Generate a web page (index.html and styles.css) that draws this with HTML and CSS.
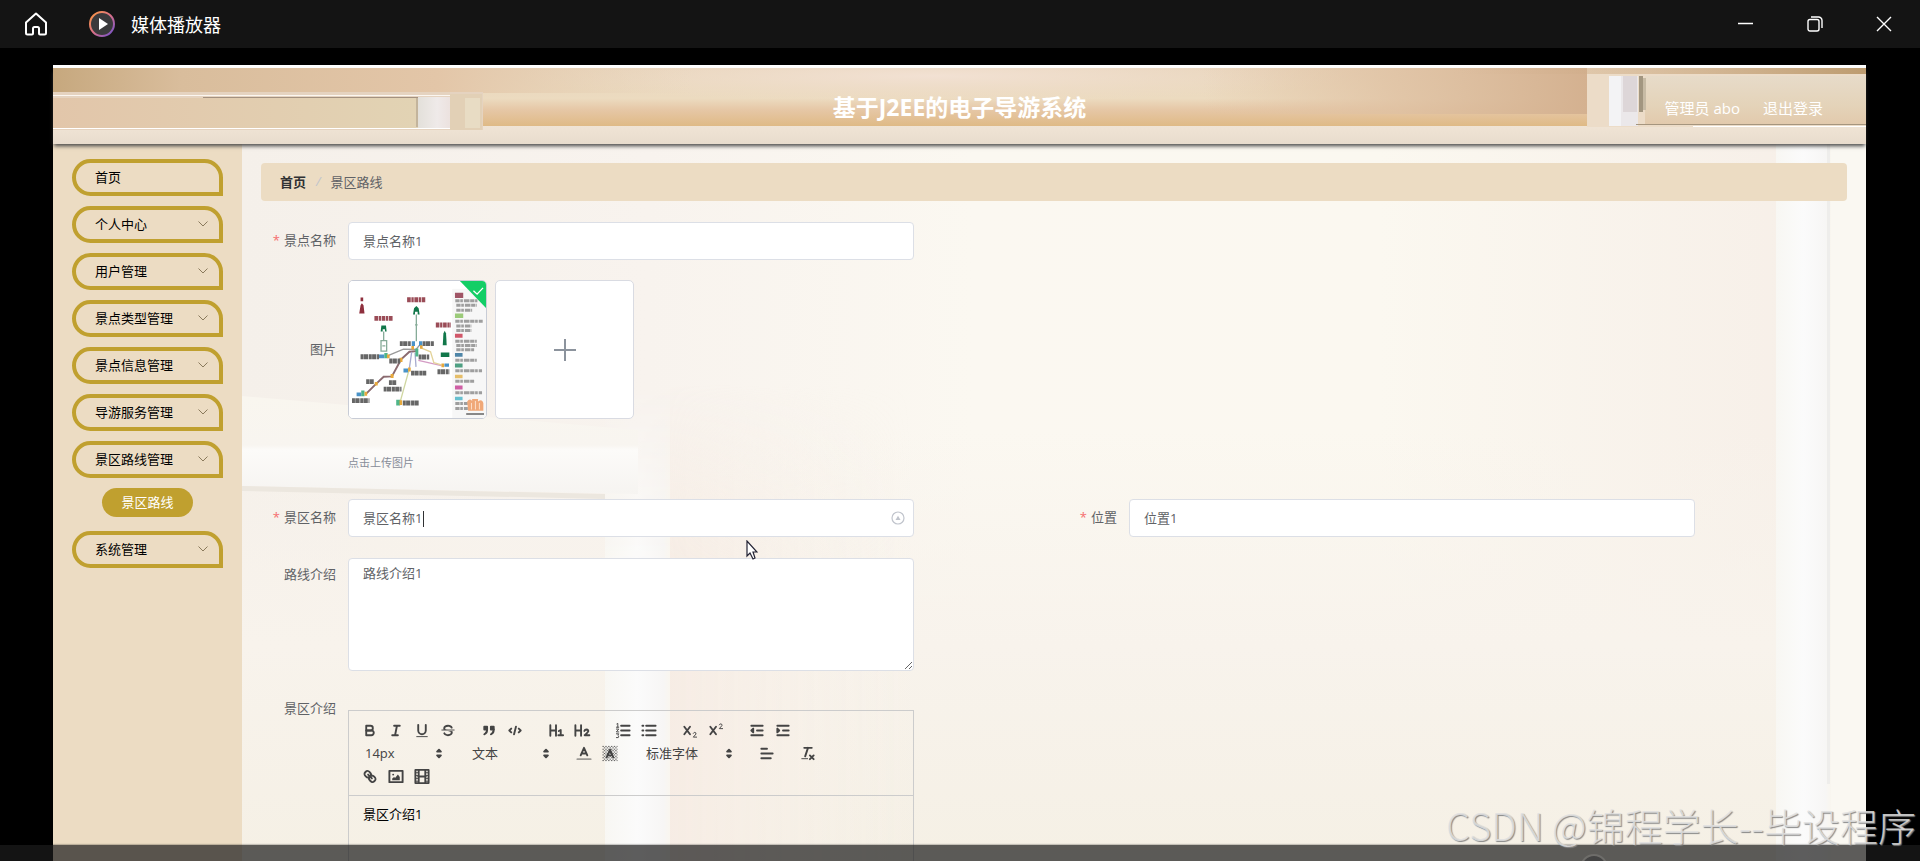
FILE: index.html
```html
<!DOCTYPE html>
<html lang="zh-CN">
<head>
    <meta charset="UTF-8">
    <meta name="viewport" content="width=device-width, initial-scale=1.0">
    <title>媒体播放器</title>
    <link rel="stylesheet" href="styles.css">
</head>
<body>
    <div class="player">
        <!-- Player title bar -->
        <div class="titlebar">
            <button class="tb-btn home" aria-label="主页">
                <svg width="24" height="24" viewBox="0 0 24 24" fill="none" stroke="#fff" stroke-width="2" stroke-linejoin="round"><path d="M12 1.5 L2 10.5 V21 a1.5 1.5 0 0 0 1.500 1.500 H8 a1 1 0 0 0 1-1 V16.500 a1.500 1.500 0 0 1 1.500-1.500 h3 a1.500 1.500 0 0 1 1.500 1.500 V21.500 a1 1 0 0 0 1 1 h4.500 a1.500 1.500 0 0 0 1.500-1.500 V10.500 Z"/></svg>
            </button>
            <svg class="logo" width="26" height="26" viewBox="0 0 26 26">
                <defs>
                    <linearGradient id="ring" x1="0" y1="0" x2="1" y2="1">
                        <stop offset="0" stop-color="#ff9a3c"/>
                        <stop offset="0.5" stop-color="#d9708a"/>
                        <stop offset="1" stop-color="#6a4fd0"/>
                    </linearGradient>
                </defs>
                <circle cx="13" cy="13" r="12" fill="#3a3a3c" stroke="url(#ring)" stroke-width="2"/>
                <path d="M10 7 L19 13 L10 19 Z" fill="#fff"/>
            </svg>
            <span class="app-name">媒体播放器</span>
            <div class="win-btns">
                <button class="tb-btn" aria-label="最小化"><svg width="16" height="16" viewBox="0 0 16 16" fill="none" stroke="#fff" stroke-width="1.500"><path d="M0 7.500 H15"/></svg></button>
                <button class="tb-btn" aria-label="还原"><svg width="16" height="16" viewBox="0 0 16 16" fill="none" stroke="#fff" stroke-width="1.400"><rect x="1" y="3.500" width="11" height="11.500" rx="2"/><path d="M4 1 H11.500 a3.500 3.500 0 0 1 3.500 3.500 V12"/></svg></button>
                <button class="tb-btn" aria-label="关闭"><svg width="16" height="16" viewBox="0 0 16 16" fill="none" stroke="#fff" stroke-width="1.400"><path d="M1 1 L15 15 M15 1 L1 15"/></svg></button>
            </div>
        </div>

        <div class="stage">
            <header class="header">
                <svg class="art" viewBox="0 0 1813 76" preserveAspectRatio="none">
                    <defs>
                        <linearGradient id="wood" x1="0" y1="0" x2="0" y2="1">
                            <stop offset="0" stop-color="#e8d4bb"/>
                            <stop offset="0.4" stop-color="#ecdbc0"/>
                            <stop offset="0.55" stop-color="#e6c7a6"/>
                            <stop offset="0.76" stop-color="#dfba86"/>
                        </linearGradient>
                        <linearGradient id="side" x1="0" y1="0" x2="1" y2="0">
                            <stop offset="0" stop-color="#c6a87e"/>
                            <stop offset="0.2" stop-color="#d9bd9c"/>
                            <stop offset="0.6" stop-color="#e3c6a8"/>
                            <stop offset="1" stop-color="#e6d3b8" stop-opacity="0"/>
                        </linearGradient>
                        <radialGradient id="glow">
                            <stop offset="0" stop-color="#f2e1d3"/>
                            <stop offset="1" stop-color="#f0dfcd" stop-opacity="0"/>
                        </radialGradient>
                        <linearGradient id="dusk" x1="0" y1="0" x2="1" y2="0">
                            <stop offset="0" stop-color="#e2c4a4" stop-opacity="0"/>
                            <stop offset="0.5" stop-color="#dfc1a2" stop-opacity="0.8"/>
                            <stop offset="1" stop-color="#d4b190"/>
                        </linearGradient>
                        <linearGradient id="lbox" x1="0" y1="0" x2="1" y2="0">
                            <stop offset="0" stop-color="#e2c6aa"/>
                            <stop offset="1" stop-color="#e2d3b4"/>
                        </linearGradient>
                        <linearGradient id="lwhite" x1="0" y1="0" x2="1" y2="0">
                            <stop offset="0" stop-color="#e3e0da"/>
                            <stop offset="0.6" stop-color="#efeae9"/>
                            <stop offset="1" stop-color="#ece2df"/>
                        </linearGradient>
                        <linearGradient id="rbox" x1="0" y1="0" x2="0" y2="1">
                            <stop offset="0" stop-color="#e7dbc9"/>
                            <stop offset="0.6" stop-color="#e4d3b9"/>
                            <stop offset="1" stop-color="#e2c9ac"/>
                        </linearGradient>
                        <linearGradient id="trim" x1="0" y1="0" x2="1" y2="0">
                            <stop offset="0" stop-color="#d4b190" stop-opacity="0"/>
                            <stop offset="1" stop-color="#bd9c70"/>
                        </linearGradient>
                        <linearGradient id="ledge" x1="0" y1="0" x2="0" y2="1">
                            <stop offset="0" stop-color="#f0e4d5"/>
                            <stop offset="1" stop-color="#e8dccd"/>
                        </linearGradient>
                    </defs>
                    <rect width="1813" height="76" fill="url(#wood)"/>
                    <ellipse cx="880" cy="8" rx="420" ry="26" fill="url(#glow)"/>
                    <rect x="1150" width="384" height="46" fill="url(#dusk)"/>
                    <rect width="640" height="25" fill="url(#side)"/>
                    <rect y="58" width="1813" height="18" fill="url(#ledge)"/>
                    <rect y="24" width="430" height="38" fill="#e5d3c0"/>
                    <rect y="27" width="397" height="1" fill="#fbf6f0"/>
                    <rect x="150" y="29" width="215" height="1" fill="#a39180"/>
                    <rect y="30" width="365" height="30" fill="url(#lbox)"/>
                    <rect x="363" y="30" width="2" height="29" fill="#c3b49c"/>
                    <rect x="365" y="29" width="32" height="31" fill="url(#lwhite)"/>
                    <rect x="397" y="26" width="32" height="36" fill="#e2d0b6"/>
                    <rect x="412" y="30" width="15" height="30" fill="#e8dcc4"/>
                    <rect y="60" width="397" height="1" fill="#fff"/>
                    <rect x="1400" width="413" height="6" fill="url(#trim)"/>
                    <rect x="1534" y="6" width="279" height="53" fill="#ecdcc8"/>
                    <rect x="1556" y="8" width="29" height="50" fill="#ebe8ea"/>
                    <rect x="1556" y="8" width="12" height="50" fill="#f3f3f5"/>
                    <rect x="1570" y="8" width="14" height="36" fill="#ddd6d8"/>
                    <rect x="1592" y="8" width="221" height="49" fill="url(#rbox)"/>
                    <rect x="1586" y="8" width="4" height="36" fill="#a29680"/>
                    <rect x="1590" y="10" width="3" height="32" fill="#c7bba5"/>
                    <rect x="1583" y="56" width="230" height="1" fill="#a5957e"/>
                    <rect x="1640" y="58" width="173" height="1" fill="#fff"/>
                </svg>
                <h1>基于J2EE的电子导游系统</h1>
                <div class="user">
                    <span>管理员 abo</span>
                    <a href="#">退出登录</a>
                </div>
            </header>

            <div class="main">
                <!-- Side menu -->
                <nav class="side">
                    <a class="item" href="#">首页</a>
                    <a class="item" href="#">个人中心<svg class="arrow" viewBox="0 0 10 6"><path d="M0.500 0.500 L5 5 L9.500 0.500"/></svg></a>
                    <a class="item" href="#">用户管理<svg class="arrow" viewBox="0 0 10 6"><path d="M0.500 0.500 L5 5 L9.500 0.500"/></svg></a>
                    <a class="item" href="#">景点类型管理<svg class="arrow" viewBox="0 0 10 6"><path d="M0.500 0.500 L5 5 L9.500 0.500"/></svg></a>
                    <a class="item" href="#">景点信息管理<svg class="arrow" viewBox="0 0 10 6"><path d="M0.500 0.500 L5 5 L9.500 0.500"/></svg></a>
                    <a class="item" href="#">导游服务管理<svg class="arrow" viewBox="0 0 10 6"><path d="M0.500 0.500 L5 5 L9.500 0.500"/></svg></a>
                    <a class="item" href="#">景区路线管理<svg class="arrow" viewBox="0 0 10 6"><path d="M0.500 0.500 L5 5 L9.500 0.500"/></svg></a>
                    <a class="sub" href="#">景区路线</a>
                    <a class="item" href="#">系统管理<svg class="arrow" viewBox="0 0 10 6"><path d="M0.500 0.500 L5 5 L9.500 0.500"/></svg></a>
                </nav>

                <div class="content">
                    <svg class="art" viewBox="0 0 1624 717" preserveAspectRatio="none">
                        <defs>
                            <linearGradient id="wall" x1="0" y1="0" x2="1" y2="0">
                                <stop offset="0" stop-color="#f5f0ea"/>
                                <stop offset="0.25" stop-color="#f8f3ee"/>
                                <stop offset="0.45" stop-color="#fbf8f1"/>
                                <stop offset="0.7" stop-color="#fbf8f0"/>
                                <stop offset="1" stop-color="#f6eee7"/>
                            </linearGradient>
                            <linearGradient id="floor" x1="0" y1="0" x2="0" y2="1">
                                <stop offset="0.4" stop-color="#f8f3ec" stop-opacity="0"/>
                                <stop offset="0.7" stop-color="#f8f3ec"/>
                                <stop offset="1" stop-color="#f5f0e5"/>
                            </linearGradient>
                            <linearGradient id="beam" x1="0" y1="0" x2="0" y2="1">
                                <stop offset="0" stop-color="#f9f6ef"/>
                                <stop offset="0.5" stop-color="#f8f5f0"/>
                                <stop offset="0.55" stop-color="#fcfbf9"/>
                                <stop offset="1" stop-color="#f6f4f1"/>
                            </linearGradient>
                            <linearGradient id="pillar" x1="0" y1="0" x2="1" y2="0">
                                <stop offset="0" stop-color="#f8f7f3"/>
                                <stop offset="0.5" stop-color="#fbfbfb"/>
                                <stop offset="0.9" stop-color="#f7f6f5"/>
                                <stop offset="1" stop-color="#f9f6ef"/>
                            </linearGradient>
                            <linearGradient id="warm" x1="0" y1="0" x2="1" y2="0">
                                <stop offset="0" stop-color="#f6ece4"/>
                                <stop offset="1" stop-color="#f8f2ea" stop-opacity="0"/>
                            </linearGradient>
                            <linearGradient id="fade" x1="0" y1="0" x2="0" y2="1">
                                <stop offset="0" stop-color="#000"/>
                                <stop offset="0.4" stop-color="#fff"/>
                            </linearGradient>
                            <mask id="low"><rect y="240" width="1624" height="477" fill="url(#fade)"/></mask>
                        </defs>
                        <rect width="1624" height="717" fill="url(#wall)"/>
                        <rect width="1624" height="717" fill="url(#floor)"/>
                        <g mask="url(#low)">
                            <rect x="428" y="240" width="240" height="477" fill="url(#warm)"/>
                            <rect x="363" y="240" width="65" height="477" fill="url(#pillar)"/>
                        </g>
                        <path d="M0 252 L396 286 V350 L0 342 Z" fill="url(#beam)"/>
                        <path d="M0 342 L363 350 V355 L0 347 Z" fill="#ece7df"/>
                        <rect x="1534" width="55" height="717" fill="url(#pillar)"/>
                        <rect x="1585" width="3" height="640" fill="#eeedeb"/>
                        <rect x="1589" width="35" height="717" fill="#faf8f2"/>
                    </svg>

                    <div class="crumbs">
                        <a href="#">首页</a>
                        <i>/</i>
                        <span>景区路线</span>
                    </div>

                    <form class="form">
                        <div class="fi wide">
                            <label class="req" for="spot">景点名称</label>
                            <div class="field"><input type="text" id="spot" value="景点名称1"></div>
                        </div>

                        <div class="fi wide pic">
                            <label for="pic">图片</label>
                            <div class="field">
                                <div class="cards">
                                    <div class="card">
                                        <!-- Route map thumbnail -->
                                        <svg viewBox="25 16 415 418" preserveAspectRatio="none">
                                            <rect x="25" y="16" width="415" height="418" fill="#fff"/>
                                            <rect x="338" y="40" width="102" height="394" fill="#f7f7f7"/>
                                            <path d="M60 90 L64 84 L69 90 L72 115 H56 Z M60 66 h8 v12 h-8 Z" fill="#8e2f3d"/>
                                            <g stroke="#9a4c57" stroke-width="15" stroke-dasharray="11 2 7 2">
                                                <path d="M201 73 H258 M102 130 H159 M288 150 H334"/>
                                            </g>
                                            <g fill="#11774a">
                                                <path d="M219 118 L222 99 L229 92 L236 99 L239 118 H233 V110 H225 V118 Z"/>
                                                <path d="M121 170 L123 152 H137 L139 170 H134 V163 H127 V170 Z"/>
                                                <path d="M309 212 L311 176 L315 168 L319 176 L321 212 Z"/>
                                                <path d="M303 234 H329 V248 H303 Z"/>
                                            </g>
                                            <g fill="none" stroke="#86ab98" stroke-width="4">
                                                <path d="M229 118 V200 M225 150 h8 M130 170 V198"/>
                                                <path d="M122 198 H139 V230 H122 Z M126 214 H135"/>
                                            </g>
                                            <g fill="none" stroke-width="4">
                                                <path d="M145 243 L190 224 L228 225 L240 210" stroke="#999"/>
                                                <path d="M75 362 L107 330 L130 308 L155 307 L183 255 L208 232 L230 230" stroke="#8b6b70" stroke-width="6"/>
                                                <path d="M215 232 L207 288 M225 235 L228 278" stroke="#a7abcf"/>
                                                <path d="M235 258 L305 274" stroke="#d49bc4"/>
                                                <path d="M243 220 L272 232 L282 265 L305 272" stroke="#e3d39a"/>
                                                <path d="M180 385 L206 290" stroke="#cfd6a0"/>
                                            </g>
                                            <g fill="#4a93c8">
                                                <path d="M116 240 h16 v12 h-16 Z M215 200 h10 v14 h-10 Z M237 200 h10 v14 h-10 Z M190 283 h14 v12 h-14 Z M48 356 h14 v12 h-14 Z M314 268 h14 v10 h-14 Z"/>
                                            </g>
                                            <g fill="#4fb58a">
                                                <path d="M132 236 h10 v16 h-10 Z M226 222 h9 v24 h-9 Z M62 350 h10 v18 h-10 Z M168 378 h12 v18 h-12 Z"/>
                                            </g>
                                            <g fill="#e8a93c">
                                                <path d="M140 240 h8 v12 h-8 Z M178 250 h9 v13 h-9 Z M103 324 h9 v11 h-9 Z M151 300 h9 v12 h-9 Z M72 354 h8 v12 h-8 Z M204 280 h8 v12 h-8 Z M305 268 h8 v11 h-8 Z M214 214 h8 v11 h-8 Z M240 212 h8 v11 h-8 Z M178 380 h8 v14 h-8 Z"/>
                                            </g>
                                            <g stroke="#666" stroke-width="15" stroke-dasharray="9 1 13 2">
                                                <path d="M60 247 H116 M179 207 H212 M248 207 H282 M147 260 H180 M236 248 H268 M213 297 H259 M293 293 H329 M77 323 H102 M146 326 H168 M130 346 H184 M34 381 H87 M188 388 H236"/>
                                            </g>
                                            <g stroke="#888" stroke-width="9" stroke-dasharray="13 2 8 3 17 2" opacity="0.8">
                                                <path d="M347 76 H414 M350 90 H412 M350 105 H398 M347 139 H430 M350 153 H396 M350 167 H396 M347 200 H412 M350 213 H412 M350 226 H404 M347 258 H412 M347 290 H428 M347 322 H404 M347 357 H428 M347 390 H385 M347 405 H385"/>
                                            </g>
                                            <path d="M346 52 H371 V68 H346 Z" fill="#a05566"/>
                                            <path d="M346 115 H371 V129 H346 Z" fill="#9ccb7a"/>
                                            <path d="M346 177 H369 V189 H346 Z" fill="#d1586a"/>
                                            <path d="M346 236 H369 V247 H346 Z" fill="#4f86a8"/>
                                            <path d="M346 268 H369 V280 H346 Z" fill="#4fa083"/>
                                            <path d="M346 302 H369 V313 H346 Z" fill="#e6be6a"/>
                                            <path d="M346 335 H369 V347 H346 Z" fill="#cf5fa5"/>
                                            <path d="M346 369 H369 V380 H346 Z" fill="#67c0d0"/>
                                            <path d="M383 384 Q390 372 398 382 V376 H416 V384 Q428 374 432 388 V412 H386 Z" fill="#f0a878"/>
                                            <path d="M396 388 v20 M408 382 v26 M420 388 v20" stroke="#fbe0cb" stroke-width="3"/>
                                            <path d="M380 422 H434" stroke="#888" stroke-width="6"/>
                                            <path d="M361 16 H440 V98 Z" fill="#13ce66"/>
                                            <path d="M402 46 L413 56 L431 37" fill="none" stroke="#fff" stroke-width="4"/>
                                        </svg>
                                    </div>
                                    <div class="card add">
                                        <input type="file" id="pic">
                                        <svg width="22" height="22" viewBox="0 0 22 22" stroke="#8c939d" stroke-width="2"><path d="M11 0 V22 M0 11 H22"/></svg>
                                    </div>
                                </div>
                                <p class="tip">点击上传图片</p>
                            </div>
                        </div>

                        <div class="fi">
                            <label class="req" for="area">景区名称</label>
                            <div class="field">
                                <input type="text" id="area" value="景区名称1">
                                <span class="caret"></span>
                                <svg class="clear" viewBox="0 0 14 14" fill="none" stroke="#c0c4cc" stroke-width="1.200"><circle cx="7" cy="7" r="6"/><path d="M5.500 8.500 L7 6 L8.500 8.500 Z"/></svg>
                            </div>
                        </div>
                        <div class="fi second">
                            <label class="req" for="place">位置</label>
                            <div class="field"><input type="text" id="place" value="位置1"></div>
                        </div>

                        <div class="fi">
                            <label class="top" for="route">路线介绍</label>
                            <div class="field"><textarea id="route">路线介绍1</textarea></div>
                        </div>

                        <div class="fi wide">
                            <label class="top" id="introLabel">景区介绍</label>
                            <div class="field editor">
                                <div class="toolbar">
                                    <span class="group">
                                        <button type="button" aria-label="加粗"><svg viewBox="0 0 18 18"><path class="s" d="M5,4H9.500A2.500,2.500,0,0,1,12,6.500v0A2.500,2.500,0,0,1,9.500,9H5A0,0,0,0,1,5,9V4A0,0,0,0,1,5,4Z"/><path class="s" d="M5,9h5.500A2.500,2.500,0,0,1,13,11.500v0A2.500,2.500,0,0,1,10.500,14H5a0,0,0,0,1,0,0V9A0,0,0,0,1,5,9Z"/></svg></button>
                                        <button type="button" aria-label="斜体"><svg viewBox="0 0 18 18"><path class="s" d="M7 4H13M5 14H11M8 14L10 4"/></svg></button>
                                        <button type="button" aria-label="下划线"><svg viewBox="0 0 18 18"><path class="s" d="M5,3V9a4.012,4.012,0,0,0,4,4H9a4.012,4.012,0,0,0,4-4V3"/><rect class="f" x="3" y="15" width="12" height="1"/></svg></button>
                                        <button type="button" aria-label="删除线"><svg viewBox="0 0 18 18"><path class="s t" d="M15.500 8.500H2.500"/><path class="f" d="M9.007,8C6.542,7.791,6,7.519,6,6.500,6,5.792,7.283,5,9,5c1.571,0,2.765.679,2.969,1.309a1,1,0,0,0,1.900-.617C13.356,4.106,11.354,3,9,3,6.200,3,4,4.538,4,6.500a3.200,3.200,0,0,0,.5,1.843Z"/><path class="f" d="M8.984,10C11.457,10.208,12,10.479,12,11.500c0,.708-1.283,1.500-3,1.500-1.571,0-2.765-.679-2.969-1.309a1,1,0,1,0-1.900.617C4.644,13.894,6.646,15,9,15c2.800,0,5-1.538,5-3.500a3.200,3.200,0,0,0-.5-1.843Z"/></svg></button>
                                    </span>
                                    <span class="group">
                                        <button type="button" aria-label="引用"><svg viewBox="0 0 18 18"><rect class="f s" x="4" y="5" width="3" height="3"/><rect class="f s" x="11" y="5" width="3" height="3"/><path class="f s" d="M7,8c0,4.031-3,5-3,5M14,8c0,4.031-3,5-3,5"/></svg></button>
                                        <button type="button" aria-label="代码"><svg viewBox="0 0 18 18"><path class="s" d="M5 7L3 9L5 11M13 7L15 9L13 11M10 5L8 13"/></svg></button>
                                    </span>
                                    <span class="group">
                                        <button type="button" aria-label="标题1"><svg viewBox="0 0 18 18"><path class="s" d="M3 3.500V14.500M9 3.500V14.500M3 9H9M12 9.500L14 8.500V14M11.500 14H16.500"/></svg></button>
                                        <button type="button" aria-label="标题2"><svg viewBox="0 0 18 18"><path class="s" d="M2 3.500V14.500M8 3.500V14.500M2 9H8M11.500 9.500Q12 8 13.800 8Q16 8.200 15.600 10Q15 11.500 11.800 14H16.800"/></svg></button>
                                    </span>
                                    <span class="group">
                                        <button type="button" aria-label="有序列表"><svg viewBox="0 0 18 18"><path class="s" d="M7 4H16M7 9H16M7 14H16"/><path class="s t" d="M2.500 2L3.500 1.500V5.500M2 5.500H4.500M2 7.500H4.500L2 10.500H4.500M2 12.500H4.500L3.500 14L4.500 15L4 16.500H2"/></svg></button>
                                        <button type="button" aria-label="无序列表"><svg viewBox="0 0 18 18"><path class="s" d="M6 4H16M6 9H16M6 14H16M2 4H3M2 9H3M2 14H3"/></svg></button>
                                    </span>
                                    <span class="group">
                                        <button type="button" aria-label="下标"><svg viewBox="0 0 18 18"><path class="s" d="M3 5L9 13M9 5L3 13"/><path class="s t" d="M12.500 12Q13 11 14 11Q15.800 11.200 15.300 12.800L12.500 16H16"/></svg></button>
                                        <button type="button" aria-label="上标"><svg viewBox="0 0 18 18"><path class="s" d="M3 5L9 13M9 5L3 13"/><path class="s t" d="M12.500 3Q13 2 14 2Q15.800 2.200 15.300 3.800L12.500 7H16"/></svg></button>
                                    </span>
                                    <span class="group">
                                        <button type="button" aria-label="减少缩进"><svg viewBox="0 0 18 18"><path class="s" d="M3 14H15M3 4H15M9 9H15"/><path class="f s" d="M5 7V11L3 9Z"/></svg></button>
                                        <button type="button" aria-label="增加缩进"><svg viewBox="0 0 18 18"><path class="s" d="M3 14H15M3 4H15M9 9H15"/><path class="f s" d="M3 7V11L5 9Z"/></svg></button>
                                    </span>
                                    <span class="group pick size">
                                        <select aria-label="字号"><option>14px</option></select>
                                        <svg viewBox="0 0 18 18"><path class="f s" d="M7 11L9 13L11 11ZM7 7L9 5L11 7Z"/></svg>
                                    </span>
                                    <span class="group pick head">
                                        <select aria-label="标题"><option>文本</option></select>
                                        <svg viewBox="0 0 18 18"><path class="f s" d="M7 11L9 13L11 11ZM7 7L9 5L11 7Z"/></svg>
                                    </span>
                                    <span class="group">
                                        <button type="button" aria-label="文字颜色"><svg viewBox="0 0 18 18"><path class="s" d="M5.500 11L9 3L12.500 11M6.500 9H11.500"/><path class="s" opacity="0.5" d="M2 15H16"/></svg></button>
                                        <button type="button" aria-label="背景颜色"><svg viewBox="0 0 18 18"><g fill="none" stroke="#555" stroke-width="1" stroke-dasharray="1.500 1.500"><path d="M1 1.500H17M1 4.500H17M1 7.500H17M1 10.500H17M1 13.500H17M1 16.500H17"/><path stroke-dashoffset="1.500" d="M1 3H17M1 6H17M1 9H17M1 12H17M1 15H17"/></g><path class="s" d="M5.500 13L9 5L12.500 13M6.500 11H11.500"/></svg></button>
                                    </span>
                                    <span class="group pick font">
                                        <select aria-label="字体"><option>标准字体</option></select>
                                        <svg viewBox="0 0 18 18"><path class="f s" d="M7 11L9 13L11 11ZM7 7L9 5L11 7Z"/></svg>
                                    </span>
                                    <span class="group">
                                        <button type="button" aria-label="对齐"><svg viewBox="0 0 18 18"><path class="s" d="M3 9H15M3 14H13M3 4H9"/></svg></button>
                                    </span>
                                    <span class="group">
                                        <button type="button" aria-label="清除格式"><svg viewBox="0 0 18 18"><path class="s" d="M5 3H13M6 12L9 3M11 11L15 15M15 11L11 15"/><rect class="f" x="2" y="14" width="7" height="1"/></svg></button>
                                    </span>
                                    <span class="group">
                                        <button type="button" aria-label="链接"><svg viewBox="0 0 18 18"><path class="s" d="M7 7L11 11"/><path class="s" d="M8.900,4.577a3.476,3.476,0,0,1,.36,4.679A3.476,3.476,0,0,1,4.577,8.900C3.185,7.500,2.035,6.400,4.217,4.217S7.500,3.185,8.900,4.577Z"/><path class="s" d="M13.423,9.100a3.476,3.476,0,0,0-4.679-.36,3.476,3.476,0,0,0,.36,4.679c1.392,1.392,2.500,2.542,4.679.36S14.815,10.500,13.423,9.100Z"/></svg></button>
                                        <button type="button" aria-label="图片"><svg viewBox="0 0 18 18"><rect class="s" x="2" y="3" width="14" height="12"/><circle class="f" cx="6" cy="7" r="1"/><path class="f" d="M5 13V11L7 9.500L8 10.500L11 7L13 9.500V13Z"/></svg></button>
                                        <button type="button" aria-label="视频"><svg viewBox="0 0 18 18"><path class="s" d="M2 2H16V16H2ZM5.500 2V16M12.500 2V16M5 9H13"/><path class="s t" d="M2 5H5M2 8H5M2 11H5M2 14H5M13 5H16M13 8H16M13 11H16M13 14H16"/></svg></button>
                                    </span>
                                </div>
                                <div class="text" contenteditable="true" role="textbox" aria-labelledby="introLabel">景区介绍1</div>
                            </div>
                        </div>
                    </form>
                </div>
            </div>
        </div>

        <!-- Playback bar and things floating over the video -->
        <div class="playbar"><span class="knob"></span></div>
        <div class="watermark">CSDN @锦程学长--毕设程序</div>
        <svg class="pointer" viewBox="0 0 12 20"><path d="M1 1 V16 L4 13 L7 19 L9 18 L7 12 H11 Z" fill="#fff" stroke="#223" stroke-width="1.200"/></svg>
    </div>
</body>
</html>
```
FILE: styles.css
```css
* {
    box-sizing: border-box;
}
body {
    margin: 0;
    background-color: #000;
    font-family: "Open Sans", "Noto Sans CJK SC", sans-serif;
    font-size: 13px;
    color: #606266;
}
a {
    color: inherit;
    text-decoration: none;
}
button, input, select, textarea {
    font: inherit;
    color: inherit;
}
.player {
    position: relative;
    display: flex;
    flex-direction: column;
    height: 100vh;
    overflow: hidden;
}

/* title bar */
.titlebar {
    display: flex;
    align-items: center;
    flex: none;
    height: 48px;
    padding: 0 2px 0 24px;
    background-color: #141414;
    color: #fff;
}
.tb-btn {
    display: flex;
    align-items: center;
    justify-content: center;
    width: 69px;
    height: 48px;
    padding: 0;
    border: none;
    background: none;
}
.home {
    width: 24px;
}
.logo {
    margin: 0 16px 0 41px;
}
.app-name {
    font-size: 18px;
}
.win-btns {
    display: flex;
    margin-left: auto;
}

/* page in the video */
.stage {
    display: flex;
    flex-direction: column;
    flex: 1;
    min-height: 0;
    margin: 17px 54px 0 53px;
    border-top: 3px solid #fff;
}
.art {
    position: absolute;
    top: 0;
    left: 0;
    width: 100%;
    height: 100%;
}
.header {
    position: relative;
    z-index: 1;
    display: flex;
    align-items: center;
    justify-content: center;
    flex: none;
    height: 76px;
    padding-top: 2px;
    color: #fff;
    box-shadow: 0 3px 4px -1px #444;
}
.header h1 {
    position: relative;
    margin: 0;
    font-size: 23px;
    line-height: 32px;
}
.user {
    position: absolute;
    right: 43px;
    display: flex;
    gap: 23px;
    font-size: 15px;
}
.main {
    display: flex;
    flex: 1;
    min-height: 0;
}

/* side menu */
.side {
    display: flex;
    flex-direction: column;
    flex: none;
    gap: 10px;
    width: 189px;
    padding: 15px 19px;
    background-color: #ecdcc3;
    color: #000;
}
.item {
    display: flex;
    align-items: center;
    justify-content: space-between;
    height: 37px;
    padding: 0 11px 2px 19px;
    border: 4px solid #c0a02f;
    border-radius: 20px 20px 0 20px;
}
.arrow {
    width: 10px;
    height: 6px;
    fill: none;
    stroke: #8a7a5c;
}
.sub {
    align-self: center;
    height: 29px;
    margin-bottom: 4px;
    padding: 0 19px;
    border-radius: 15px;
    background-color: #c0a02f;
    color: #fff;
    line-height: 29px;
}

/* content */
.content {
    position: relative;
    flex: 1;
    padding: 19px;
    overflow: hidden;
}
.crumbs {
    position: relative;
    display: flex;
    align-items: center;
    gap: 10px;
    height: 38px;
    padding: 0 19px 2px;
    border-radius: 4px;
    background-color: #ecdcc3;
}
.crumbs a {
    color: #303133;
    font-weight: bold;
}
.crumbs i {
    color: #c0c4cc;
}
.form {
    position: relative;
    display: grid;
    grid-template-columns: 1fr 1fr;
    row-gap: 21px;
    margin-top: 21px;
    padding-right: 24px;
}
.fi {
    display: flex;
    grid-column: 1;
    padding-right: 128px;
}
.second {
    grid-column: 2;
}
.fi > label {
    flex: none;
    width: 87px;
    padding-right: 12px;
    line-height: 36px;
    text-align: right;
}
.fi > .top {
    line-height: 32px;
}
.req::before {
    content: "*";
    margin-right: 4px;
    color: #f56c6c;
}
.field {
    position: relative;
    flex: 1;
    min-width: 0;
}
.field > input, .field > textarea {
    display: block;
    width: 100%;
    height: 38px;
    padding: 0 14px 1px;
    border: 1px solid #dcdfe6;
    border-radius: 4px;
    background-color: #fff;
    outline: none;
}
.field > textarea {
    height: 113px;
    padding-top: 4px;
    resize: vertical;
}
.caret {
    position: absolute;
    top: 12px;
    left: 75px;
    width: 1px;
    height: 16px;
    background-color: #303133;
}
.clear {
    position: absolute;
    top: 12px;
    right: 9px;
    width: 14px;
    height: 14px;
}

/* picture upload */
.fi > label[for="pic"] {
    line-height: 139px;
}
.cards {
    display: flex;
    gap: 8px;
}
.card {
    position: relative;
    width: 139px;
    height: 139px;
    border: 1px solid #c8ccd6;
    border-radius: 5px;
    background-color: #fff;
    overflow: hidden;
}
.card > svg {
    display: block;
    width: 100%;
    height: 100%;
}
.add {
    display: flex;
    align-items: center;
    justify-content: center;
    border-color: #d9dbe2;
}
.add > svg {
    width: 22px;
    height: 22px;
}
.add input {
    position: absolute;
    width: 100%;
    height: 100%;
    opacity: 0;
}
.tip {
    margin: 33px 0 4px;
    color: #878d99;
    font-size: 11px;
    line-height: 22px;
}
.pic {
    margin-top: -1px;
}

/* rich text editor */
.editor {
    margin-top: 18px;
    border: 1px solid #ccc;
}
.toolbar {
    display: flex;
    flex-wrap: wrap;
    padding: 8px 7px 7px 8px;
    border-bottom: 1px solid #ccc;
    color: #444;
}
.group {
    position: relative;
    display: flex;
    height: 23px;
    margin-right: 15px;
}
.group button {
    width: 26px;
    height: 23px;
    padding: 3px 4px;
    border: none;
    background: none;
}
.group svg {
    display: block;
    width: 18px;
    height: 17px;
}
.s {
    fill: none;
    stroke: #444;
    stroke-width: 2;
    stroke-linecap: round;
    stroke-linejoin: round;
}
.t {
    stroke-width: 1;
}
.f {
    fill: #444;
}
.pick select {
    width: 100%;
    padding: 0 8px 2px;
    border: none;
    background: none;
    appearance: none;
}
.pick svg {
    position: absolute;
    top: 3px;
    right: 1px;
    pointer-events: none;
}
.size, .head {
    width: 92px;
}
.font {
    width: 101px;
}
.text {
    min-height: 190px;
    padding: 8px 14px;
    color: #000;
    outline: none;
}

/* player overlay */
.playbar {
    position: absolute;
    right: 0;
    bottom: 0;
    left: 0;
    height: 16px;
    background-color: rgba(28, 28, 28, 0.71);
    box-shadow: 0 -1px 1px rgba(0, 0, 0, 0.2);
    overflow: hidden;
}
.knob {
    position: absolute;
    top: 9px;
    left: 83%;
    width: 28px;
    height: 28px;
    margin-left: -14px;
    border: 2px solid #6e6d6a;
    border-radius: 50%;
    background-color: #444;
}
.watermark {
    position: absolute;
    right: 4px;
    bottom: 12px;
    color: rgba(225, 225, 225, 0.85);
    font-family: "Noto Sans CJK SC", sans-serif;
    font-size: 38px;
    font-weight: 300;
    line-height: 48px;
    text-shadow: 1px 1px 1px #888;
}
.pointer {
    position: absolute;
    top: 540px;
    left: 746px;
    width: 12px;
    height: 20px;
}
```
